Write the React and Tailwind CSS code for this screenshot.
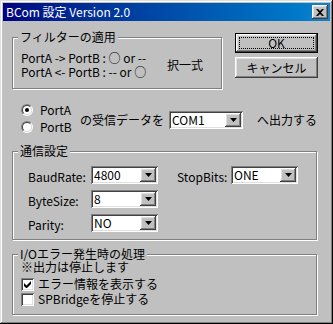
import React from 'react';

const raised =
  'shadow-[inset_-1px_-1px_#404040,inset_1px_1px_#fff,inset_-2px_-2px_#808080,inset_2px_2px_#dfdfdf]';
const sunken =
  'shadow-[inset_1px_1px_#808080,inset_-1px_-1px_#fff,inset_2px_2px_#404040,inset_-2px_-2px_#dfdfdf]';

const Group = ({ label, className, children }) => (
  <div className={`relative border border-[#808080] shadow-[inset_1px_1px_#fff,1px_1px_#fff] ${className}`}>
    <span className="absolute -top-[7px] left-[5px] bg-[#c0c0c0] px-[2px] leading-[12px] whitespace-nowrap">
      {label}
    </span>
    {children}
  </div>
);

const Combo = ({ value, className }) => (
  <div className={`flex items-center h-[18px] bg-white p-[2px] ${sunken} ${className}`}>
    <span className="flex-1 pl-[1px] leading-[14px] whitespace-nowrap">{value}</span>
    <span className={`w-[16px] h-[14px] bg-[#c0c0c0] flex items-center justify-center ${raised}`}>
      <svg width="7" height="4" viewBox="0 0 7 4">
        <polygon points="0,0 7,0 3.5,4" fill="#000" />
      </svg>
    </span>
  </div>
);

const Radio = ({ checked, label }) => (
  <div className="flex items-center h-[17px]">
    <span className="w-[12px] h-[12px] rounded-full border border-[#808080] border-r-white border-b-white flex items-center justify-center">
      <span className="w-[10px] h-[10px] rounded-full border border-[#404040] border-r-[#dfdfdf] border-b-[#dfdfdf] bg-white flex items-center justify-center">
        {checked && <span className="w-[4px] h-[4px] rounded-full bg-black" />}
      </span>
    </span>
    <span className="ml-[7px] leading-[16px]">{label}</span>
  </div>
);

const Check = ({ checked, label, className }) => (
  <div className={`flex items-center h-[14px] ${className}`}>
    <span className={`w-[13px] h-[13px] bg-white flex items-center justify-center ${sunken}`}>
      {checked && (
        <svg width="7" height="7" viewBox="0 0 7 7">
          <path d="M0 2v3l2 2h1l4-4V0L2.5 4.5z" fill="#000" />
        </svg>
      )}
    </span>
    <span className="ml-[4px] leading-[14px] whitespace-nowrap">{label}</span>
  </div>
);

const rows = [
  { label: 'BaudRate:', value: '4800' },
  { label: 'ByteSize:', value: '8' },
  { label: 'Parity:', value: 'NO' },
];

export default function App() {
  return (
    <div className="w-[333px] h-[324px] overflow-hidden bg-[#c0c0c0] p-[3px] text-[12px] text-black font-['Noto_Sans_CJK_JP',sans-serif] shadow-[inset_-1px_-1px_#000,inset_1px_1px_#dfdfdf,inset_-2px_-2px_#808080,inset_2px_2px_#fff]">
      {/* Title bar */}
      <div className="h-[18px] flex items-center bg-linear-to-r from-[#000080] to-[#1084d0] pl-[3px] pr-[2px] text-white">
        <span className="leading-[16px] whitespace-nowrap">BCom 設定 Version 2.0</span>
        <span className={`ml-auto w-[16px] h-[14px] bg-[#c0c0c0] flex items-center justify-center ${raised}`}>
          <svg width="8" height="7" viewBox="0 0 8 7">
            <path d="M0 0h2l2 2 2-2h2L5 3.5 8 7H6L4 5 2 7H0l3-3.5z" fill="#000" />
          </svg>
        </span>
      </div>

      {/* Filter + buttons */}
      <div className="flex items-start mt-[12px]">
        <Group label="フィルターの適用" className="ml-[9px] mt-[4px] w-[210px] h-[52px]">
          <div className="flex items-center pl-[8px] pt-[13px]">
            <div className="w-[146px] whitespace-nowrap">
              <div className="h-[14px] leading-[14px]">PortA -&gt; PortB : ○ or --</div>
              <div className="h-[14px] leading-[14px]">PortA &lt;- PortB : -- or ○</div>
            </div>
            <span className="leading-[16px]">択一式</span>
          </div>
        </Group>
        <div className="ml-[13px] w-[83px] flex flex-col gap-[4px]">
          <div className="h-[20px] border border-black">
            <div className={`h-full p-[3px] bg-[#c0c0c0] ${raised}`}>
              <div className="h-full border border-dotted border-black flex items-center justify-center leading-[12px]">
                OK
              </div>
            </div>
          </div>
          <div className={`h-[21px] bg-[#c0c0c0] flex items-center justify-center leading-[16px] ${raised}`}>
            キャンセル
          </div>
        </div>
      </div>

      {/* Port select */}
      <div className="flex items-start mt-[12px]">
        <div className="ml-[18px] w-[59px]">
          <Radio checked label="PortA" />
          <Radio label="PortB" />
        </div>
        <span className="w-[89px] mt-[10px] leading-[18px] whitespace-nowrap">の受信データを</span>
        <Combo value="COM1" className="w-[74px] mt-[10px]" />
        <span className="ml-[14px] mt-[10px] leading-[18px] whitespace-nowrap">へ出力する</span>
      </div>

      {/* Communication */}
      <Group label="通信設定" className="ml-[9px] mt-[16px] w-[305px] h-[89px]">
        <div className="flex items-start pl-[15px] pt-[14px]">
          <div className="flex flex-col gap-[6px]">
            {rows.map((r) => (
              <div key={r.label} className="flex items-start h-[18px]">
                <span className="w-[63px] mt-[3px] leading-[16px]">{r.label}</span>
                <Combo value={r.value} className="w-[67px]" />
              </div>
            ))}
          </div>
          <div className="flex items-start ml-[19px]">
            <span className="w-[54px] mt-[3px] leading-[16px]">StopBits:</span>
            <Combo value="ONE" className="w-[67px]" />
          </div>
        </div>
      </Group>

      {/* I/O error */}
      <Group label="I/Oエラー発生時の処理" className="ml-[9px] mt-[14px] w-[305px] h-[61px]">
        <div className="pl-[8px] pt-[5px]">
          <div className="h-[14px] leading-[14px]">※出力は停止します</div>
          <Check checked label="エラー情報を表示する" className="mt-[3px]" />
          <Check label="SPBridgeを停止する" className="mt-[1px]" />
        </div>
      </Group>
    </div>
  );
}
